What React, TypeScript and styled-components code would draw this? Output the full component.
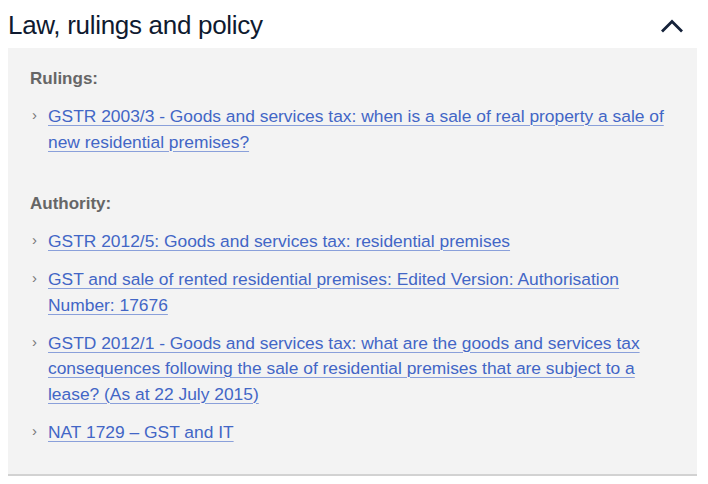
import styled, { createGlobalStyle } from "styled-components";

type Item = { label: string };

const rulings: Item[] = [
  {
    label:
      "GSTR 2003/3 - Goods and services tax: when is a sale of real property a sale of new residential premises?",
  },
];

const authority: Item[] = [
  { label: "GSTR 2012/5: Goods and services tax: residential premises" },
  {
    label:
      "GST and sale of rented residential premises: Edited Version: Authorisation Number: 17676",
  },
  {
    label:
      "GSTD 2012/1 - Goods and services tax: what are the goods and services tax consequences following the sale of residential premises that are subject to a lease? (As at 22 July 2015)",
  },
  { label: "NAT 1729 – GST and IT" },
];

function App() {
  return (
    <Wrapper>
      <GlobalStyle />
      <Header>
        <Title>Law, rulings and policy</Title>
        <Toggle aria-label="Collapse">
          <svg width="24" height="14" viewBox="0 0 24 14">
            <path
              d="M2 12.5 L12 2.5 L22 12.5"
              fill="none"
              stroke="#15223a"
              strokeWidth="2.8"
            />
          </svg>
        </Toggle>
      </Header>
      <Panel>
        <SectionTitle>Rulings:</SectionTitle>
        <LinkList>
          {rulings.map((item) => (
            <LinkItem key={item.label}>
              <Arrow>›</Arrow>
              <Link href="#">{item.label}</Link>
            </LinkItem>
          ))}
        </LinkList>
        <SectionTitle spaced>Authority:</SectionTitle>
        <LinkList>
          {authority.map((item) => (
            <LinkItem key={item.label}>
              <Arrow>›</Arrow>
              <Link href="#">{item.label}</Link>
            </LinkItem>
          ))}
        </LinkList>
      </Panel>
    </Wrapper>
  );
}

export default App;

const GlobalStyle = createGlobalStyle`
  html, body {
    margin: 0;
    padding: 0;
    background: #ffffff;
  }
  body {
    font-family: "Liberation Sans", Arial, sans-serif;
  }
`;

const Wrapper = styled.div`
  width: 708px;
  height: 484px;
  padding: 0 11px 0 8px;
  box-sizing: border-box;
`;

const Header = styled.div`
  display: flex;
  align-items: center;
  justify-content: space-between;
  height: 48px;
`;

const Title = styled.h2`
  margin: 0;
  padding-top: 2px;
  font-size: 26px;
  font-weight: 400;
  color: #0f1a30;
  letter-spacing: -0.3px;
`;

const Toggle = styled.button`
  display: flex;
  align-items: center;
  border: none;
  background: none;
  padding: 0;
  margin-right: 13px;
  margin-top: 3px;
  cursor: pointer;
`;

const Panel = styled.div`
  background: #f3f3f3;
  border-bottom: 2px solid #d2d2d2;
  height: 428px;
  box-sizing: border-box;
  padding: 19px 22px 0 22px;
`;

const SectionTitle = styled.h3<{ spaced?: boolean }>`
  margin: ${(p) => (p.spaced ? "37px" : "0")} 0 0 0;
  font-size: 17px;
  font-weight: 700;
  color: #666666;
  line-height: 24px;
`;

const LinkList = styled.ul`
  list-style: none;
  margin: 13px 0 0 0;
  padding: 0;
  display: flex;
  flex-direction: column;
  gap: 12.5px;
`;

const LinkItem = styled.li`
  display: flex;
  align-items: flex-start;
  font-size: 17.4px;
  line-height: 25.5px;
`;

const Arrow = styled.span`
  width: 18px;
  flex-shrink: 0;
  color: #777777;
  font-size: 15px;
  line-height: 22px;
  padding-left: 2px;
  box-sizing: border-box;
`;

const Link = styled.a`
  color: #4266c6;
  text-decoration: underline;
  text-decoration-color: #8aa0da;
  text-underline-offset: 3px;
  text-decoration-thickness: 1px;
`;
